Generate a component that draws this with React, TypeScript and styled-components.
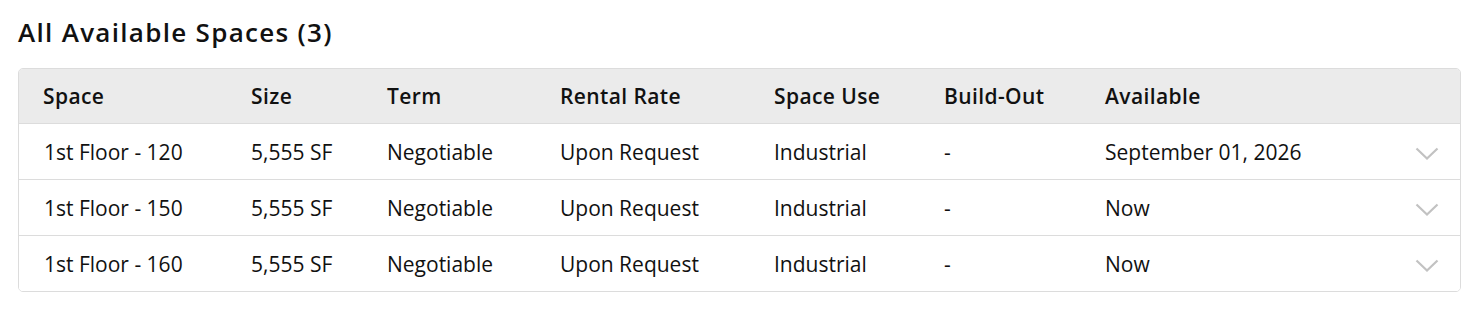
import styled, { createGlobalStyle } from "styled-components";

const GlobalStyle = createGlobalStyle`
  body {
    margin: 0;
    background: #ffffff;
    font-family: "Open Sans", "Noto Sans", sans-serif;
    color: #111111;
  }
`;

const Page = styled.div`
  padding: 15px 11px 26px 18px;
`;

const Title = styled.h2`
  margin: 0 0 18px;
  font-size: 26px;
  font-weight: 600;
  line-height: 35px;
  letter-spacing: 1.3px;
`;

const Table = styled.div`
  border: 1px solid #dcdcdc;
  border-radius: 5px;
  overflow: hidden;
`;

const Row = styled.div<{ $head?: boolean }>`
  display: grid;
  grid-template-columns: 208px 136px 173px 214px 170px 161px 1fr 45px;
  align-items: center;
  height: ${(p) => (p.$head ? "54px" : "55px")};
  padding-left: 24px;
  background: ${(p) => (p.$head ? "#ebebeb" : "#ffffff")};
  font-size: 21px;
  font-weight: ${(p) => (p.$head ? 600 : 400)};
  letter-spacing: ${(p) => (p.$head ? "0.4px" : "0")};

  & + & {
    border-top: 1px solid #dcdcdc;
  }
`;

const Cell = styled.div<{ $shift?: number }>`
  padding-left: ${(p) => p.$shift ?? 0}px;
  white-space: nowrap;
`;

const Chevron = styled.svg`
  width: 24px;
  height: 13px;
  display: block;
  margin-top: 3px;
`;

const headers = ["Space", "Size", "Term", "Rental Rate", "Space Use", "Build-Out", "Available"];

const spaces = [
  ["1st Floor - 120", "5,555 SF", "Negotiable", "Upon Request", "Industrial", "-", "September 01, 2026"],
  ["1st Floor - 150", "5,555 SF", "Negotiable", "Upon Request", "Industrial", "-", "Now"],
  ["1st Floor - 160", "5,555 SF", "Negotiable", "Upon Request", "Industrial", "-", "Now"],
];

export default function App() {
  return (
    <>
      <GlobalStyle />
      <Page>
        <Title>All Available Spaces (3)</Title>
        <Table>
          <Row $head>
            {headers.map((h) => (
              <Cell key={h}>{h}</Cell>
            ))}
            <Cell />
          </Row>
          {spaces.map((s) => (
            <Row key={s[0]}>
              {s.map((v, i) => (
                <Cell key={i} $shift={i === 0 ? 1 : 0}>
                  {v}
                </Cell>
              ))}
              <Cell>
                <Chevron viewBox="0 0 24 13" fill="none">
                  <path d="M1.5 1.5 L12 11.5 L22.5 1.5" stroke="#c2c2c2" strokeWidth="2.2" />
                </Chevron>
              </Cell>
            </Row>
          ))}
        </Table>
      </Page>
    </>
  );
}
